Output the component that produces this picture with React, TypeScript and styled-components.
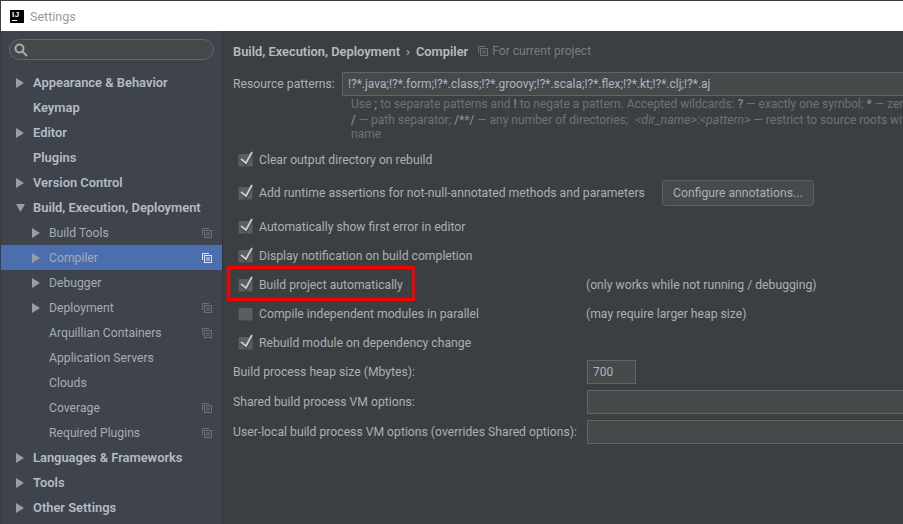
import { createGlobalStyle, styled } from "styled-components";

const GlobalStyle = createGlobalStyle`
  html, body {
    margin: 0;
    padding: 0;
    width: 903px;
    height: 524px;
    overflow: hidden;
    background: #3c3f41;
  }
  body, input, button {
    font-family: Roboto, "Noto Sans", sans-serif;
  }
`;

const Window = styled.div`
  width: 903px;
  height: 524px;
  display: flex;
  flex-direction: column;
  overflow: hidden;
  background: #3c3f41;
  border-top: 1px solid #3b3f45;
  box-sizing: border-box;
`;

const TitleBar = styled.div`
  height: 30px;
  flex: none;
  margin-left: 1px;
  display: flex;
  align-items: center;
  gap: 6px;
  padding-left: 9px;
  background: #fff;
  color: #999999;
  font-size: 12.5px;
`;

const LogoBox = styled.div`
  width: 14px;
  height: 13px;
  box-sizing: border-box;
  padding-left: 2px;
  background: #000;
  color: #fff;
  font-family: "Liberation Sans", sans-serif;
  font-size: 8px;
  font-weight: 700;
  line-height: 9px;
  letter-spacing: 0.5px;
`;

const LogoBar = styled.div`
  width: 5px;
  height: 1px;
  margin-top: 1px;
  background: #fff;
`;

const Body = styled.div`
  flex: 1;
  display: flex;
  min-height: 0;
`;

const Sidebar = styled.nav`
  width: 223px;
  flex: none;
  box-sizing: border-box;
  padding-top: 8px;
  background: #3e434c;
  border-left: 1px solid #3a3d40;
  border-right: 1px solid #2f3133;
`;

const SearchBox = styled.div`
  width: 205px;
  height: 21px;
  margin: 0 0 10px 8px;
  padding-left: 4px;
  display: flex;
  align-items: center;
  box-sizing: border-box;
  background: #45484a;
  border: 1px solid #64676a;
  border-radius: 11px;
`;

const Row = styled.div<{ $depth: number; $selected?: boolean }>`
  height: 25px;
  display: flex;
  align-items: center;
  box-sizing: border-box;
  padding-left: ${(p) => (p.$depth === 0 ? 15 : 31)}px;
  padding-right: 10px;
  background: ${(p) => (p.$selected ? "#4b6eaf" : "transparent")};
  font-size: ${(p) => (p.$depth === 0 ? 12.9 : 12.2)}px;
  font-weight: ${(p) => (p.$depth === 0 ? 600 : 400)};
  color: ${(p) => (p.$depth === 0 ? "#b4bcc6" : "#a5adb6")};
  white-space: nowrap;
`;

const ArrowSlot = styled.span`
  width: 17px;
  flex: none;
  display: flex;
  align-items: center;
`;

const RowLabel = styled.span`
  flex: 1;
`;

const Content = styled.main`
  flex: 1;
  min-width: 0;
  padding: 10px 0 0 10px;
  color: #a9b0b6;
  font-size: 12.2px;
  white-space: nowrap;
`;

const Breadcrumb = styled.div`
  display: flex;
  align-items: center;
  height: 20px;
  font-size: 12.85px;
  font-weight: 600;
  color: #b5bbc0;
`;

const Separator = styled.span`
  margin: 0 6px;
  font-weight: 400;
`;

const ProjectNote = styled.span`
  display: inline-flex;
  align-items: center;
  gap: 4px;
  margin-left: 10px;
  font-size: 12.1px;
  color: #787c7f;
  font-weight: 400;
`;

const PatternRow = styled.div`
  display: flex;
  align-items: center;
  margin-top: 11px;
  height: 24px;
`;

const PatternLabel = styled.label`
  width: 109px;
  flex: none;
`;

const Field = styled.div<{ $width?: number }>`
  box-sizing: border-box;
  height: 24px;
  padding-left: 5px;
  display: flex;
  align-items: center;
  flex: ${(p) => (p.$width ? "none" : 1)};
  width: ${(p) => (p.$width ? `${p.$width}px` : "auto")};
  background: #45494a;
  border: 1px solid #646464;
  border-right-width: ${(p) => (p.$width ? 1 : 0)}px;
  color: #a9b7c6;
  font-size: 11.95px;
`;

const Hint = styled.div`
  margin: 1px 0 0 118px;
  width: 560px;
  color: #6e7275;
  font-size: 12px;
  line-height: 15px;
`;

const HintLine = styled.div`
  height: 15px;
  overflow: hidden;
`;

const HintKey = styled.b`
  color: #85898c;
  font-weight: 500;
`;

const HintPattern = styled.i`
  margin-left: 4px;
  font-size: 12.4px;
`;

const Checks = styled.div`
  margin-top: 3px;
`;

const CheckRow = styled.div<{ $gap?: number }>`
  position: relative;
  display: flex;
  align-items: center;
  height: 29px;
  margin-top: ${(p) => p.$gap ?? 0}px;
  padding-left: 5px;
`;

const CheckLabel = styled.span`
  margin-left: 6px;
`;

const Aside = styled.span`
  position: absolute;
  left: 353px;
`;

const ConfigureButton = styled.button`
  height: 26px;
  width: 152px;
  margin-left: 17px;
  padding: 0;
  background: #474a4c;
  border: 1px solid #5e6060;
  border-radius: 3px;
  color: #a9b0b6;
  font-size: 12.2px;
`;

const OptionRow = styled.div`
  height: 30px;
  display: flex;
  align-items: center;
`;

const OptionLabel = styled.span`
  width: 354px;
  flex: none;
`;

const Callout = styled.div`
  position: absolute;
  left: 227px;
  top: 266px;
  width: 188px;
  height: 35px;
  box-sizing: border-box;
  border: 3px solid #f80000;
`;

const Triangle = ({ open }: { open?: boolean }) => (
  <svg width="9" height="10" viewBox="0 0 9 10">
    <path d={open ? "M0 1h9L4.5 9z" : "M0 0l8 5-8 5z"} fill="#9a9da0" />
  </svg>
);

const CopyIcon = ({ bright }: { bright?: boolean }) => (
  <svg width="10" height="10" viewBox="0 0 10 10" fill="none" stroke={bright ? "#dfe6f2" : "#6c7076"}>
    <path d="M.5 7V.5H7" />
    <rect x="2.5" y="2.5" width="7" height="7" />
    <path d="M4 5h4M4 7h4" />
  </svg>
);

const Check = ({ checked }: { checked: boolean }) => (
  <svg width="15" height="17" viewBox="0 0 15 17">
    <rect x="0.5" y="3" width="14" height="13" rx="1" fill="#5b5e60" />
    <rect x="0.5" y="15" width="14" height="1" fill="#4a4c4e" />
    {checked && (
      <>
        <path d="M3 8.5l5 4.5 6-11" fill="none" stroke="#404244" strokeWidth="3" />
        <path d="M3 8l5 4 6-11" fill="none" stroke="#c6c8c9" strokeWidth="2" />
      </>
    )}
  </svg>
);

const tree = [
  { label: "Appearance & Behavior", depth: 0, arrow: true },
  { label: "Keymap", depth: 0 },
  { label: "Editor", depth: 0, arrow: true },
  { label: "Plugins", depth: 0 },
  { label: "Version Control", depth: 0, arrow: true },
  { label: "Build, Execution, Deployment", depth: 0, arrow: true, open: true },
  { label: "Build Tools", depth: 1, arrow: true, copy: true },
  { label: "Compiler", depth: 1, arrow: true, copy: true, selected: true },
  { label: "Debugger", depth: 1, arrow: true },
  { label: "Deployment", depth: 1, arrow: true, copy: true },
  { label: "Arquillian Containers", depth: 1, copy: true },
  { label: "Application Servers", depth: 1 },
  { label: "Clouds", depth: 1 },
  { label: "Coverage", depth: 1, copy: true },
  { label: "Required Plugins", depth: 1, copy: true },
  { label: "Languages & Frameworks", depth: 0, arrow: true },
  { label: "Tools", depth: 0, arrow: true },
  { label: "Other Settings", depth: 0, arrow: true },
];

export default function App() {
  return (
    <Window>
      <GlobalStyle />
      <TitleBar>
        <LogoBox>
          IJ
          <LogoBar />
        </LogoBox>
        <span>Settings</span>
      </TitleBar>
      <Body>
        <Sidebar>
          <SearchBox>
            <svg width="14" height="14" viewBox="0 0 14 14" fill="none" stroke="#a9abad" strokeWidth="2">
              <circle cx="5.5" cy="5.5" r="4" />
              <path d="M8.5 8.5l4.5 4.5" />
            </svg>
          </SearchBox>
          {tree.map((item) => (
            <Row key={item.label} $depth={item.depth} $selected={item.selected}>
              <ArrowSlot>{item.arrow && <Triangle open={item.open} />}</ArrowSlot>
              <RowLabel>{item.label}</RowLabel>
              {item.copy && <CopyIcon bright={item.selected} />}
            </Row>
          ))}
        </Sidebar>
        <Content>
          <Breadcrumb>
            Build, Execution, Deployment<Separator>›</Separator>Compiler
            <ProjectNote>
              <CopyIcon />
              For current project
            </ProjectNote>
          </Breadcrumb>
          <PatternRow>
            <PatternLabel>Resource patterns:</PatternLabel>
            <Field>!?*.java;!?*.form;!?*.class;!?*.groovy;!?*.scala;!?*.flex;!?*.kt;!?*.clj;!?*.aj</Field>
          </PatternRow>
          <Hint>
            <HintLine>
              Use <HintKey>;</HintKey> to separate patterns and <HintKey>!</HintKey> to negate a pattern. Accepted wildcards: <HintKey>?</HintKey> — exactly one symbol; <HintKey>*</HintKey> — zero or more symbols;
            </HintLine>
            <HintLine>
              <HintKey>/</HintKey> — path separator; <HintKey>/**/</HintKey> — any number of directories; <HintPattern>&lt;dir_name&gt;:&lt;pattern&gt;</HintPattern> — restrict to source roots with the specified
            </HintLine>
            <HintLine>name</HintLine>
          </Hint>
          <Checks>
            <CheckRow>
              <Check checked />
              <CheckLabel>Clear output directory on rebuild</CheckLabel>
            </CheckRow>
            <CheckRow $gap={4}>
              <Check checked />
              <CheckLabel>Add runtime assertions for not-null-annotated methods and parameters</CheckLabel>
              <ConfigureButton>Configure annotations...</ConfigureButton>
            </CheckRow>
            <CheckRow $gap={5}>
              <Check checked />
              <CheckLabel>Automatically show first error in editor</CheckLabel>
            </CheckRow>
            <CheckRow>
              <Check checked />
              <CheckLabel>Display notification on build completion</CheckLabel>
            </CheckRow>
            <CheckRow>
              <Check checked />
              <CheckLabel>Build project automatically</CheckLabel>
              <Aside>(only works while not running / debugging)</Aside>
            </CheckRow>
            <CheckRow>
              <Check checked={false} />
              <CheckLabel>Compile independent modules in parallel</CheckLabel>
              <Aside>(may require larger heap size)</Aside>
            </CheckRow>
            <CheckRow>
              <Check checked />
              <CheckLabel>Rebuild module on dependency change</CheckLabel>
            </CheckRow>
          </Checks>
          <OptionRow>
            <OptionLabel>Build process heap size (Mbytes):</OptionLabel>
            <Field $width={49}>700</Field>
          </OptionRow>
          <OptionRow>
            <OptionLabel>Shared build process VM options:</OptionLabel>
            <Field />
          </OptionRow>
          <OptionRow>
            <OptionLabel>User-local build process VM options (overrides Shared options):</OptionLabel>
            <Field />
          </OptionRow>
        </Content>
      </Body>
      <Callout />
    </Window>
  );
}
